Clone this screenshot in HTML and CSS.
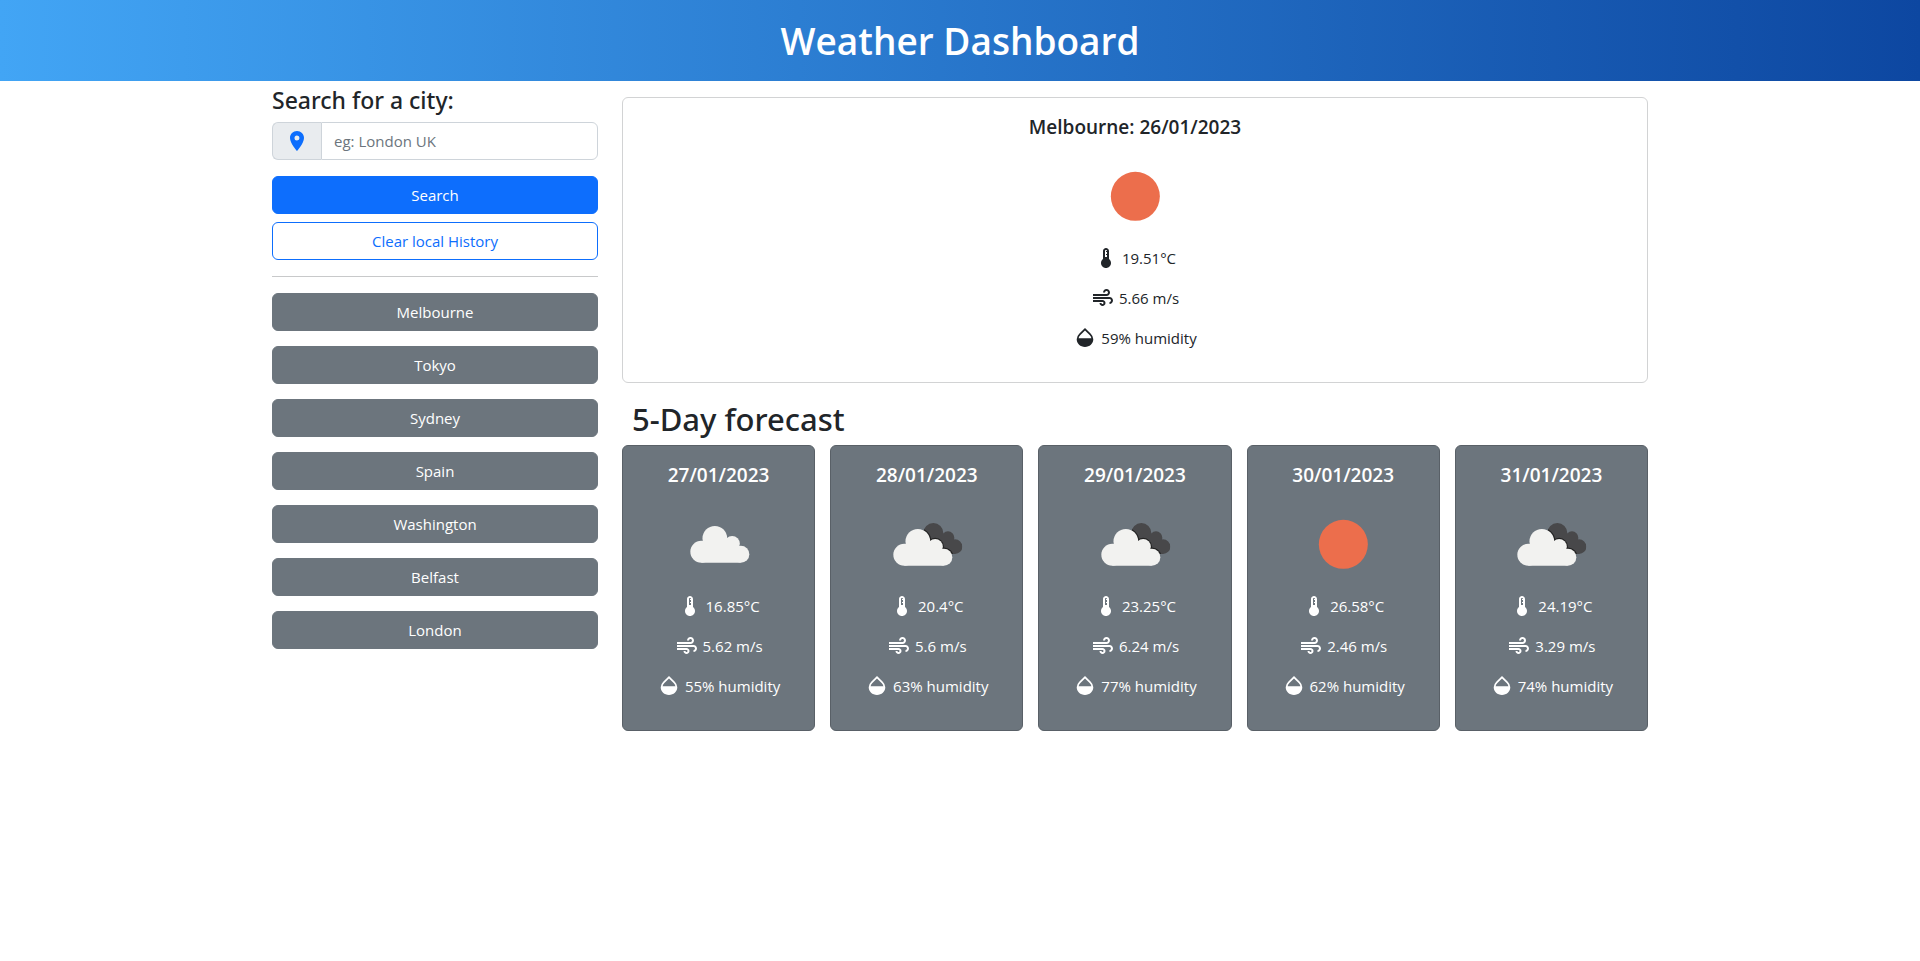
FILE: index.html
```html
<!DOCTYPE html>
<html lang="en">
<head>
<meta charset="utf-8">
<meta name="viewport" content="width=device-width, initial-scale=1">
<title>Weather Dashboard</title>
<link rel="stylesheet" href="styles.css">
</head>
<body>
<svg class="sprite" aria-hidden="true">
  <defs>
    <symbol id="pin" viewBox="0 0 24 24"><path d="M12 2C8.13 2 5 5.13 5 9c0 5.250 7 13 7 13s7-7.750 7-13c0-3.870-3.130-7-7-7zm0 9.500a2.500 2.500 0 1 1 0-5 2.500 2.500 0 0 1 0 5z"/></symbol>
    <symbol id="temp" viewBox="0 0 24 24"><path d="M15 13V5c0-1.660-1.340-3-3-3S9 3.340 9 5v8c-1.210.91-2 2.370-2 4 0 2.760 2.240 5 5 5s5-2.240 5-5c0-1.630-.79-3.090-2-4zm-4-8c0-.55.45-1 1-1s1 .45 1 1h-1v1h1v2h-1v1h1v2h-2V5z"/></symbol>
    <symbol id="wind" viewBox="0 0 24 24"><path d="M14.500 17c0 1.650-1.350 3-3 3s-3-1.350-3-3h2c0 .55.45 1 1 1s1-.45 1-1-.45-1-1-1H2v-2h9.500c1.650 0 3 1.350 3 3zM19 6.500C19 4.570 17.430 3 15.500 3S12 4.570 12 6.500h2c0-.83.67-1.500 1.500-1.500s1.500.67 1.500 1.500S16.330 8 15.500 8H2v2h13.500c1.930 0 3.500-1.570 3.500-3.500zm-.5 4.500H2v2h16.500c.83 0 1.500.67 1.500 1.500s-.67 1.500-1.500 1.500v2c1.930 0 3.500-1.570 3.500-3.500S20.430 11 18.500 11z"/></symbol>
    <symbol id="drop" viewBox="0 0 24 24"><path d="M12 2.100 6.200 7.800a8.200 8.200 0 0 0-2.500 5.500C3.700 17.600 7.400 21 12 21s8.300-3.400 8.300-7.700a8.200 8.200 0 0 0-2.500-5.500zM5.600 12.300c.2-1.200.8-2.200 1.800-3.200L12 4.600l4.600 4.500c1 1 1.600 2 1.800 3.200z"/></symbol>
    <g id="puff"><circle cx="97" cy="173" r="33"/><circle cx="137.500" cy="133" r="37"/><circle cx="189.500" cy="149" r="23"/><circle cx="215.500" cy="180.500" r="25.500"/><path d="M97 206V150l40-17 52 16 26 30v27z"/></g>
    <clipPath id="rear"><circle cx="169" cy="117" r="30"/><circle cx="213" cy="131" r="19"/><circle cx="234" cy="158" r="22"/><path d="M169 117l44 14 21 27v22h-90z"/></clipPath>
    <symbol id="sun" viewBox="0 0 300 300"><circle cx="151" cy="151" r="73.500" fill="#ec6e4c"/></symbol>
    <symbol id="cloud" viewBox="0 0 300 300"><use href="#puff" fill="#f2f2f0"/></symbol>
    <symbol id="clouds" viewBox="0 0 300 300">
      <g clip-path="url(#rear)"><path d="M120 80h150v110H120z" fill="#48484a"/><use href="#puff" x="-15" y="9" fill="#222" stroke="#222" stroke-width="7"/></g>
      <use href="#puff" x="-15" y="9" fill="#f2f2f0"/>
    </symbol>
  </defs>
</svg>

<header class="banner"><h1>Weather Dashboard</h1></header>

<div class="container">
  <aside class="sidebar">
    <form class="search">
      <h2 class="search-title"><label for="city">Search for a city:</label></h2>
      <div class="input-group">
        <span class="addon"><svg class="icon"><use href="#pin"/></svg></span>
        <input id="city" type="text" placeholder="eg: London UK">
      </div>
      <button class="btn primary" type="button">Search</button>
      <button class="btn outline" type="button">Clear local History</button>
    </form>
    <hr>
    <div class="history">
      <button class="btn secondary" type="button">Melbourne</button>
      <button class="btn secondary" type="button">Tokyo</button>
      <button class="btn secondary" type="button">Sydney</button>
      <button class="btn secondary" type="button">Spain</button>
      <button class="btn secondary" type="button">Washington</button>
      <button class="btn secondary" type="button">Belfast</button>
      <button class="btn secondary" type="button">London</button>
    </div>
  </aside>

  <main class="content">
    <section class="card today">
      <h3>Melbourne: 26/01/2023</h3>
      <svg class="sky"><use href="#sun"/></svg>
      <p><svg class="icon"><use href="#temp"/></svg>19.51°C</p>
      <p><svg class="icon"><use href="#wind"/></svg>5.66 m/s</p>
      <p><svg class="icon"><use href="#drop"/></svg>59% humidity</p>
    </section>

    <h2 class="forecast-title">5-Day forecast</h2>
    <div class="forecast">
      <section class="card day">
        <h3>27/01/2023</h3>
        <svg class="sky"><use href="#cloud"/></svg>
        <p><svg class="icon"><use href="#temp"/></svg>16.85°C</p>
        <p><svg class="icon"><use href="#wind"/></svg>5.62 m/s</p>
        <p><svg class="icon"><use href="#drop"/></svg>55% humidity</p>
      </section>
      <section class="card day">
        <h3>28/01/2023</h3>
        <svg class="sky"><use href="#clouds"/></svg>
        <p><svg class="icon"><use href="#temp"/></svg>20.4°C</p>
        <p><svg class="icon"><use href="#wind"/></svg>5.6 m/s</p>
        <p><svg class="icon"><use href="#drop"/></svg>63% humidity</p>
      </section>
      <section class="card day">
        <h3>29/01/2023</h3>
        <svg class="sky"><use href="#clouds"/></svg>
        <p><svg class="icon"><use href="#temp"/></svg>23.25°C</p>
        <p><svg class="icon"><use href="#wind"/></svg>6.24 m/s</p>
        <p><svg class="icon"><use href="#drop"/></svg>77% humidity</p>
      </section>
      <section class="card day">
        <h3>30/01/2023</h3>
        <svg class="sky"><use href="#sun"/></svg>
        <p><svg class="icon"><use href="#temp"/></svg>26.58°C</p>
        <p><svg class="icon"><use href="#wind"/></svg>2.46 m/s</p>
        <p><svg class="icon"><use href="#drop"/></svg>62% humidity</p>
      </section>
      <section class="card day">
        <h3>31/01/2023</h3>
        <svg class="sky"><use href="#clouds"/></svg>
        <p><svg class="icon"><use href="#temp"/></svg>24.19°C</p>
        <p><svg class="icon"><use href="#wind"/></svg>3.29 m/s</p>
        <p><svg class="icon"><use href="#drop"/></svg>74% humidity</p>
      </section>
    </div>
  </main>
</div>
</body>
</html>
```
FILE: styles.css
```css
* { box-sizing: border-box; }

body {
  margin: 0;
  font-family: "Segoe UI", "Open Sans", "Noto Sans", sans-serif;
  font-size: 15px;
  line-height: 24px;
  color: #212529;
  background: #fff;
}

h1, h2, h3, p { margin: 0; }
h2 { font-family: "Segoe UI", "Noto Sans", "Open Sans", sans-serif; font-weight: 500; }

.sprite { position: absolute; width: 0; height: 0; }

.banner {
  padding: 16px;
  background: linear-gradient(90deg, #42a5f5, #0d47a1);
  color: #fff;
  text-align: center;
}
.banner h1 { font-size: 37px; line-height: 49px; font-weight: 600; }

.container {
  display: grid;
  grid-template-columns: minmax(0, 1fr) minmax(0, 3fr);
  max-width: 1400px;
  margin: 0 auto;
}
.sidebar { padding: 5px 12px 0; }
.content { padding: 16px 12px 0; }

.search { display: flex; flex-direction: column; gap: 8px; }
.search-title { font-size: 23px; line-height: 28px; }

.input-group { display: flex; margin-bottom: 8px; }
.addon {
  display: flex;
  align-items: center;
  padding: 0 12px;
  border: 1px solid #ced4da;
  border-right: 0;
  border-radius: 6px 0 0 6px;
  background: #e9ecef;
  color: #0d6efd;
}
.input-group input {
  flex: 1;
  min-width: 0;
  height: 38px;
  padding: 6px 12px;
  border: 1px solid #ced4da;
  border-radius: 0 6px 6px 0;
  background: #fff;
  color: #212529;
  font: inherit;
}
.input-group input::placeholder { color: #6c757d; opacity: 1; }

.btn {
  width: 100%;
  padding: 6px 12px;
  border: 1px solid;
  border-radius: 6px;
  font: inherit;
  text-align: center;
  cursor: pointer;
}
.primary { background: #0d6efd; border-color: #0d6efd; color: #fff; }
.outline { background: #fff; border-color: #0d6efd; color: #0d6efd; }
.secondary { background: #6c757d; border-color: #6c757d; color: #fff; }

hr { margin: 16px 0; border: 0; border-top: 1px solid #c8c9ca; }
.history { display: grid; gap: 15px; }

.icon { width: 24px; height: 24px; fill: currentColor; flex: none; }
.sky { display: block; width: 100px; height: 100px; }

.card {
  display: flex;
  flex-direction: column;
  align-items: center;
  padding: 16px;
  border: 1px solid #d2d3d4;
  border-radius: 6px;
  background: #fff;
}
.card h3 { margin-bottom: 6px; font-size: 19px; line-height: 26px; font-weight: 600; }
.card p { display: flex; justify-content: center; gap: 4px; margin-bottom: 16px; white-space: nowrap; }
.day { background: #6c757d; border-color: #596067; color: #fff; }

.forecast-title { margin: 16px 0 6px; padding-left: 10px; font-size: 31px; line-height: 40px; }
.forecast { display: grid; grid-template-columns: repeat(5, minmax(0, 1fr)); gap: 15px; }

@media (max-width: 1100px) {
  .container { grid-template-columns: 1fr; }
  .forecast { grid-template-columns: repeat(auto-fit, minmax(180px, 1fr)); }
}
```
